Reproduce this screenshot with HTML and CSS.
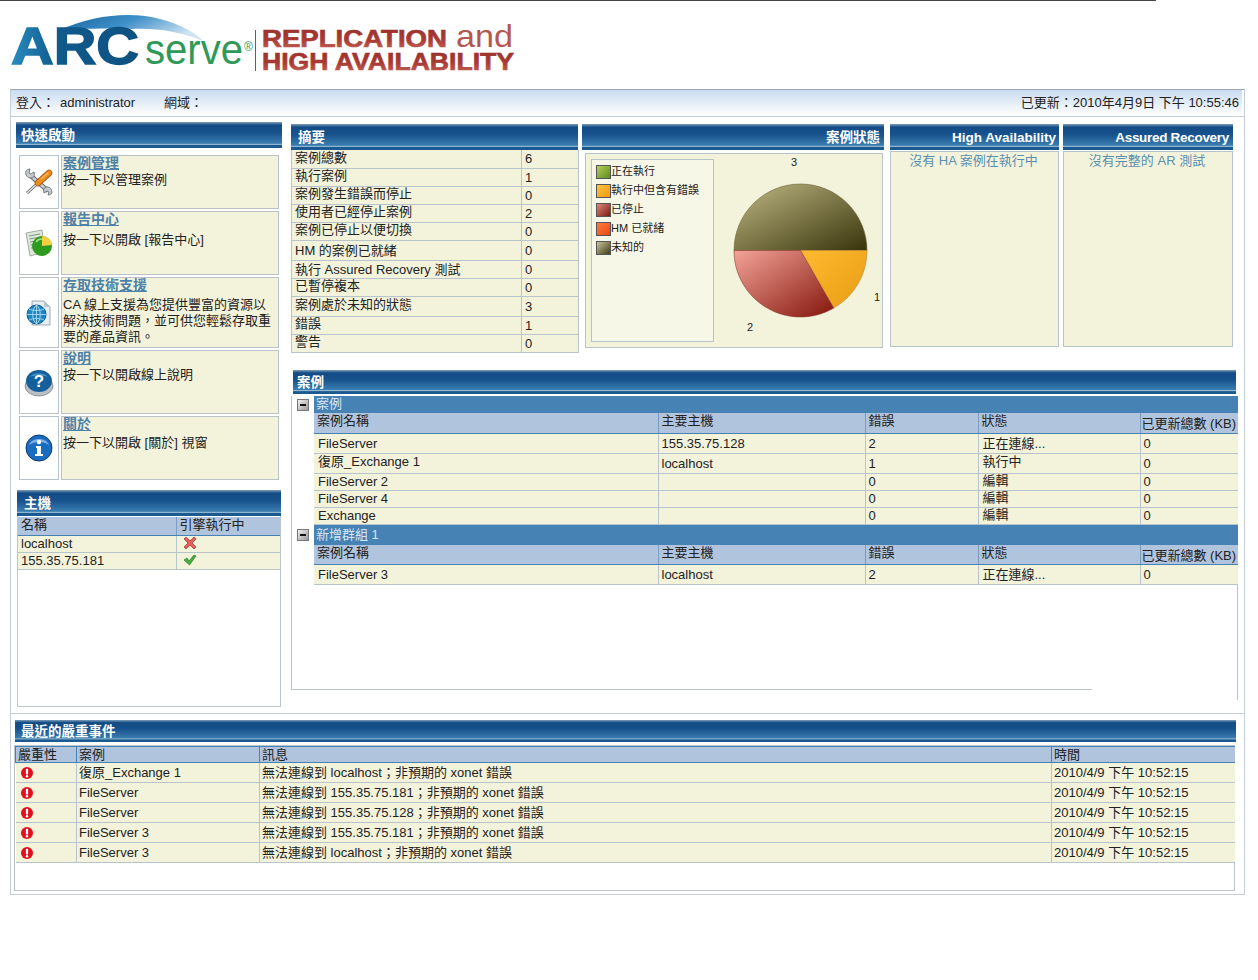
FILE: index.html
```html
<!DOCTYPE html>
<html lang="zh-Hant">
<head>
<meta charset="utf-8">
<title>ARCserve Replication and High Availability</title>
<link rel="stylesheet" href="styles.css">
</head>
<body>
<div class="topline"></div>
<header class="logo">
<svg class="logo-svg" width="530" height="88" viewBox="0 0 530 88">
<defs>
<linearGradient id="arc" x1="0" y1="0" x2="1" y2="0"><stop offset="0" stop-color="#2a8cc0"/><stop offset=".35" stop-color="#105a8c"/><stop offset="1" stop-color="#0d5180"/></linearGradient>
<linearGradient id="sw" x1="0" y1="0" x2="1" y2=".4"><stop offset="0" stop-color="#12619a"/><stop offset=".5" stop-color="#3f8fc8"/><stop offset="1" stop-color="#cfe4f2"/></linearGradient>
<linearGradient id="rd" x1="0" y1="0" x2="0" y2="1"><stop offset="0" stop-color="#97302a"/><stop offset=".55" stop-color="#a83a33"/><stop offset="1" stop-color="#c8695a"/></linearGradient>
</defs>
<path d="M58 30 C95 12 135 11 160 18 C182 24 196 32 204 41 C180 30 155 27 132 28 C112 27 80 27 58 30 Z" fill="url(#sw)"/>
<text class="l-arc" x="11" y="63" textLength="128" lengthAdjust="spacingAndGlyphs" fill="url(#arc)" stroke="url(#arc)" stroke-width="1.500">ARC</text>
<path d="M146 50 C156 34 180 30 203 41" fill="none" stroke="#fff" stroke-width="1.500"/>
<text class="l-serve" x="145" y="63" textLength="98" lengthAdjust="spacingAndGlyphs">serve</text>
<text class="l-reg" x="244" y="50">®</text>
<rect x="255" y="29" width="1" height="41" fill="#a8433a"/>
<text class="l-red" x="262" y="46" textLength="185" lengthAdjust="spacingAndGlyphs" fill="url(#rd)" stroke="url(#rd)" stroke-width=".7">REPLICATION</text>
<text class="l-and" x="456" y="46" textLength="57" lengthAdjust="spacingAndGlyphs">and</text>
<text class="l-red" x="262" y="69" textLength="252" lengthAdjust="spacingAndGlyphs" fill="url(#rd)" stroke="url(#rd)" stroke-width=".7">HIGH AVAILABILITY</text>
</svg>
</header>

<div class="frame">
  <div class="infobar">
    <div class="info-left"><span class="login">登入：</span><span class="user">administrator</span><span>網域：</span></div>
    <div>已更新：2010年4月9日 下午 10:55:46</div>
  </div>

  <div class="main">
    <div class="left">
      <div class="bar bar-quick"><b>快速啟動</b></div>
      <div class="cards">
        <div class="card c54">
          <div class="card-icon">
            <svg width="30" height="30" viewBox="0 0 30 30"><path d="M7 9 L24 24" stroke="#5b6368" stroke-width="4.500"/><path d="M7 9 L24 24" stroke="#c5cbd0" stroke-width="3"/><path d="M2 4 C1 8 3 11 7 11 C10 11 11 8 10 5 L7 7 L5 6 L6 2 C4 2 3 3 2 4 Z" fill="#c5cbd0" stroke="#5b6368" stroke-width=".8"/><path d="M28 26 C28 22 26 20 23 20 C20 20 19 23 20 26 L23 24 L25 25 L24 28 C26 28 27 27 28 26 Z" fill="#c5cbd0" stroke="#5b6368" stroke-width=".8"/><path d="M15 15 L3 26" stroke="#5b6368" stroke-width="3"/><path d="M15 15 L3 26" stroke="#dfe3e6" stroke-width="1.500"/><path d="M14 16 L25 6" stroke="#a8560f" stroke-width="6.500" stroke-linecap="round"/><path d="M14 16 L25 6" stroke="#f08c1e" stroke-width="5" stroke-linecap="round"/><path d="M17 12 L24 6" stroke="#f9c070" stroke-width="1.200"/></svg>
          </div>
          <div class="card-text"><a class="card-link">案例管理</a><p>按一下以管理案例</p></div>
        </div>
        <div class="card c64">
          <div class="card-icon">
            <svg width="30" height="30" viewBox="0 0 30 30"><path d="M2 5 L18 2 L21 24 L6 28 Z" fill="#dfe8d8" stroke="#8a9a90" stroke-width=".8"/><path d="M5 8 L16 6 M5.500 11 L14 9.500 M6 14 L11 13 M6.500 17 L10 16.500 M7 20 L10 19.500" stroke="#7a9a80" stroke-width="1"/><circle cx="18" cy="18" r="10" fill="#2e9a20"/><path d="M18 18 L18 8 A10 10 0 0 1 28 17 Z" fill="#f2d040"/><path d="M12 14 A7 7 0 0 1 18 11" fill="none" stroke="#9be080" stroke-width="1.500"/></svg>
          </div>
          <div class="card-text"><a class="card-link">報告中心</a><p class="gap">按一下以開啟 [報告中心]</p></div>
        </div>
        <div class="card c71">
          <div class="card-icon">
            <svg width="30" height="30" viewBox="0 0 30 30"><path d="M8 3 L20 3 L26 9 L26 27 L8 27 Z" fill="#e6edf3" stroke="#8c97a2" stroke-width=".8"/><path d="M20 3 L20 9 L26 9 Z" fill="#b9c6d2"/><circle cx="12.500" cy="16.500" r="9.500" fill="#1f86c4" stroke="#0d5a94"/><path d="M3 16.500 H22 M12.500 7 V26 M12.500 7 C7.500 11 7.500 22 12.500 26 M12.500 7 C17.500 11 17.500 22 12.500 26 M5 11 C9 13 16 13 20 11 M5 22 C9 20 16 20 20 22" fill="none" stroke="#bfe4f8" stroke-width=".8"/></svg>
          </div>
          <div class="card-text"><a class="card-link">存取技術支援</a><p class="gap-s">CA 線上支援為您提供豐富的資源以解決技術問題，並可供您輕鬆存取重要的產品資訊。</p></div>
        </div>
        <div class="card c64">
          <div class="card-icon">
            <svg width="30" height="30" viewBox="0 0 30 30"><ellipse cx="15" cy="19" rx="14" ry="10" fill="#b8c0c6" stroke="#7d868c" stroke-width=".8"/><ellipse cx="15" cy="14" rx="13" ry="11" fill="#15609c"/><path d="M6 10 C9 5 20 5 24 10 C20 8 10 8 6 10 Z" fill="#4a92c4"/><text class="q" x="15" y="20" text-anchor="middle">?</text></svg>
          </div>
          <div class="card-text"><a class="card-link">說明</a><p>按一下以開啟線上說明</p></div>
        </div>
        <div class="card c64">
          <div class="card-icon">
            <svg width="30" height="30" viewBox="0 0 30 30"><circle cx="15" cy="15" r="13" fill="#1a6cc0" stroke="#0c3a70"/><path d="M5 12 C8 4 22 4 25 12 C20 8 10 8 5 12 Z" fill="#7cb4e8"/><circle cx="15" cy="9" r="2.200" fill="#fff"/><path d="M12 13 H17 V21 H19 V23 H11 V21 H13 V15 H12 Z" fill="#fff"/></svg>
          </div>
          <div class="card-text"><a class="card-link">關於</a><p class="gap-t">按一下以開啟 [關於] 視窗</p></div>
        </div>
      </div>

      <div class="hosts">
        <div class="bar bar-host"><b>主機</b></div>
        <div class="host-box">
          <table class="tbl host-tbl">
            <colgroup><col class="hc1"><col class="hc2"></colgroup>
            <tr class="head h18"><th>名稱</th><th>引擎執行中</th></tr>
            <tr class="h17"><td>localhost</td><td><svg class="st" width="14" height="14" viewBox="0 0 14 14"><path d="M1 3 L3 1 L7 5 L11 1 L13 3 L9 7 L13 11 L11 13 L7 9 L3 13 L1 11 L5 7 Z" fill="#e8605a" stroke="#a8302a" stroke-width=".7"/></svg></td></tr>
            <tr class="h17"><td>155.35.75.181</td><td><svg class="st" width="14" height="14" viewBox="0 0 14 14"><path d="M1 7 L4 5 L6 8 L11 2 L13 3 L6.500 12 Z" fill="#46b040" stroke="#2a7a28" stroke-width=".7"/></svg></td></tr>
          </table>
        </div>
      </div>
    </div>

    <div class="right">
      <div class="top-panels">
        <section class="p-summary">
          <div class="bar bar-sum"><b>摘要</b></div>
          <table class="tbl sum-tbl">
            <colgroup><col class="sc1"><col class="sc2"></colgroup>
            <tr class="h18"><td class="up">案例總數</td><td>6</td></tr>
            <tr class="h18"><td class="up">執行案例</td><td>1</td></tr>
            <tr class="h18"><td class="up">案例發生錯誤而停止</td><td>0</td></tr>
            <tr class="h18"><td class="up">使用者已經停止案例</td><td>2</td></tr>
            <tr class="h18"><td class="up">案例已停止以便切換</td><td>0</td></tr>
            <tr class="h20"><td>HM 的案例已就緒</td><td>0</td></tr>
            <tr class="h18"><td>執行 Assured Recovery 測試</td><td>0</td></tr>
            <tr class="h18"><td class="up">已暫停複本</td><td>0</td></tr>
            <tr class="h20"><td class="up">案例處於未知的狀態</td><td>3</td></tr>
            <tr class="h18"><td class="up">錯誤</td><td>1</td></tr>
            <tr class="h18"><td class="up">警告</td><td>0</td></tr>
          </table>
        </section>
        <section class="p-status">
          <div class="bar bar-right"><b>案例狀態</b></div>
          <div class="status-body">
            <ul class="legend">
              <li><i class="sw sw-g"></i>正在執行</li>
              <li><i class="sw sw-o"></i>執行中但含有錯誤</li>
              <li><i class="sw sw-r"></i>已停止</li>
              <li><i class="sw sw-h"></i>HM 已就緒</li>
              <li><i class="sw sw-u"></i>未知的</li>
            </ul>
            <svg class="pie" width="168" height="193" viewBox="0 0 168 193">
              <defs>
                <linearGradient id="pu" x1="0" y1="0" x2="1" y2="1"><stop offset="0" stop-color="#c0ba86"/><stop offset="1" stop-color="#38330a"/></linearGradient>
                <linearGradient id="pr" x1="0" y1="0" x2="1" y2="1"><stop offset="0" stop-color="#f4a498"/><stop offset="1" stop-color="#84150c"/></linearGradient>
                <linearGradient id="po" x1="0" y1="0" x2="1" y2="1"><stop offset="0" stop-color="#ffba30"/><stop offset="1" stop-color="#e89c14"/></linearGradient>
              </defs>
              <path d="M86.500 96.500 L20 96.500 A66.500 66.500 0 0 1 153 96.500 Z" fill="url(#pu)" stroke="#6b6538" stroke-width=".6"/>
              <path d="M86.500 96.500 L153 96.500 A66.500 66.500 0 0 1 119.700 154.100 Z" fill="url(#po)" stroke="#b88a30" stroke-width=".6"/>
              <path d="M86.500 96.500 L119.700 154.100 A66.500 66.500 0 0 1 20 96.500 Z" fill="url(#pr)" stroke="#8a3a30" stroke-width=".6"/>
              <text class="pie-n" x="77" y="12">3</text>
              <text class="pie-n" x="160" y="147">1</text>
              <text class="pie-n" x="33" y="177">2</text>
            </svg>
          </div>
        </section>
        <section class="p-ha">
          <div class="bar bar-ha"><b>High Availability</b></div>
          <div class="note-body">沒有 HA 案例在執行中</div>
        </section>
        <section class="p-ar">
          <div class="bar bar-right bar-ar"><b>Assured Recovery</b></div>
          <div class="note-body">沒有完整的 AR 測試</div>
        </section>
      </div>

      <div class="bar bar-cases"><b>案例</b></div>
      <div class="tree">
        <div class="group">
          <span class="minus"></span>
          <div class="gtitle g17">案例</div>
        </div>
        <div class="gtable">
          <table class="tbl case-tbl">
            <colgroup><col class="cc1"><col class="cc2"><col class="cc3"><col class="cc4"><col class="cc5"></colgroup>
            <tr class="head h20"><th class="up">案例名稱</th><th class="up">主要主機</th><th class="up">錯誤</th><th class="up">狀態</th><th class="dn">已更新總數 (KB)</th></tr>
            <tr class="h20"><td>FileServer</td><td>155.35.75.128</td><td>2</td><td>正在連線...</td><td>0</td></tr>
            <tr class="h20"><td class="up">復原_Exchange 1</td><td>localhost</td><td>1</td><td class="up">執行中</td><td>0</td></tr>
            <tr class="h17"><td>FileServer 2</td><td></td><td>0</td><td class="up">編輯</td><td>0</td></tr>
            <tr class="h17"><td>FileServer 4</td><td></td><td>0</td><td class="up">編輯</td><td>0</td></tr>
            <tr class="h17"><td>Exchange</td><td></td><td>0</td><td class="up">編輯</td><td>0</td></tr>
          </table>
        </div>
        <div class="group">
          <span class="minus"></span>
          <div class="gtitle g20">新增群組 1</div>
        </div>
        <div class="gtable">
          <table class="tbl case-tbl">
            <colgroup><col class="cc1"><col class="cc2"><col class="cc3"><col class="cc4"><col class="cc5"></colgroup>
            <tr class="head h20"><th class="up">案例名稱</th><th class="up">主要主機</th><th class="up">錯誤</th><th class="up">狀態</th><th class="dn">已更新總數 (KB)</th></tr>
            <tr class="h20"><td>FileServer 3</td><td>localhost</td><td>2</td><td>正在連線...</td><td>0</td></tr>
          </table>
        </div>
      </div>
    </div>
  </div>

  <div class="events">
    <div class="bar bar-ev"><b>最近的嚴重事件</b></div>
    <div class="ev-box">
      <table class="tbl ev-tbl">
        <colgroup><col class="ec1"><col class="ec2"><col class="ec3"><col class="ec4"></colgroup>
        <tr class="head h16"><th>嚴重性</th><th>案例</th><th>訊息</th><th>時間</th></tr>
        <tr class="h20"><td><svg class="err" width="12" height="12" viewBox="0 0 13 13"><circle cx="6.500" cy="6.500" r="6.500" fill="#e0101c"/><rect x="5.300" y="2" width="2.400" height="6" fill="#fff"/><circle cx="6.500" cy="10" r="1.300" fill="#fff"/></svg></td><td>復原_Exchange 1</td><td>無法連線到 localhost；非預期的 xonet 錯誤</td><td>2010/4/9 下午 10:52:15</td></tr>
        <tr class="h20"><td><svg class="err" width="12" height="12" viewBox="0 0 13 13"><circle cx="6.500" cy="6.500" r="6.500" fill="#e0101c"/><rect x="5.300" y="2" width="2.400" height="6" fill="#fff"/><circle cx="6.500" cy="10" r="1.300" fill="#fff"/></svg></td><td>FileServer</td><td>無法連線到 155.35.75.181；非預期的 xonet 錯誤</td><td>2010/4/9 下午 10:52:15</td></tr>
        <tr class="h20"><td><svg class="err" width="12" height="12" viewBox="0 0 13 13"><circle cx="6.500" cy="6.500" r="6.500" fill="#e0101c"/><rect x="5.300" y="2" width="2.400" height="6" fill="#fff"/><circle cx="6.500" cy="10" r="1.300" fill="#fff"/></svg></td><td>FileServer</td><td>無法連線到 155.35.75.128；非預期的 xonet 錯誤</td><td>2010/4/9 下午 10:52:15</td></tr>
        <tr class="h20"><td><svg class="err" width="12" height="12" viewBox="0 0 13 13"><circle cx="6.500" cy="6.500" r="6.500" fill="#e0101c"/><rect x="5.300" y="2" width="2.400" height="6" fill="#fff"/><circle cx="6.500" cy="10" r="1.300" fill="#fff"/></svg></td><td>FileServer 3</td><td>無法連線到 155.35.75.181；非預期的 xonet 錯誤</td><td>2010/4/9 下午 10:52:15</td></tr>
        <tr class="h20"><td><svg class="err" width="12" height="12" viewBox="0 0 13 13"><circle cx="6.500" cy="6.500" r="6.500" fill="#e0101c"/><rect x="5.300" y="2" width="2.400" height="6" fill="#fff"/><circle cx="6.500" cy="10" r="1.300" fill="#fff"/></svg></td><td>FileServer 3</td><td>無法連線到 localhost；非預期的 xonet 錯誤</td><td>2010/4/9 下午 10:52:15</td></tr>
      </table>
    </div>
  </div>
</div>
</body>
</html>
```

FILE: styles.css
```css
* { box-sizing: border-box; }
html, body { margin: 0; padding: 0; background: #fff; }
body {
  width: 1258px;
  height: 980px;
  overflow: hidden;
  font-family: "Liberation Sans", "Noto Sans CJK TC", sans-serif;
  font-size: 13px;
  line-height: 15px;
  color: #222;
}
.topline { width: 1156px; height: 1px; background: #444; }
.logo { height: 88px; }
.logo-svg { display: block; }
.l-arc { font: bold 51px "Liberation Sans", sans-serif; }
.l-serve { font: 42px "Liberation Sans", sans-serif; fill: #2f9a58; }
.l-reg { font: 12px "Liberation Sans", sans-serif; fill: #2f9a58; }
.l-red { font: bold 24px "Liberation Sans", sans-serif; }
.l-and { font: 32px "Liberation Sans", sans-serif; fill: #b5574e; }

.frame {
  margin-left: 10px;
  width: 1235px;
  height: 806px;
  border: 1px solid #c3ced8;
  border-top-color: #9aa6b0;
}
.infobar {
  width: 1231px;
  height: 26px;
  padding: 0 3px 2px 5px;
  display: flex;
  justify-content: space-between;
  align-items: center;
  background: linear-gradient(#c9dcf0, #fff);
  color: #222;
}
.info-left { display: flex; }
.login { width: 44px; }
.user { width: 104px; }

.main {
  display: flex;
  gap: 9px;
  padding: 5px 0 6px 5px;
  border-top: 1px solid #c3ced8;
  border-bottom: 1px solid #c3ced8;
}

.bar {
  height: 26px;
  display: flex;
  align-items: center;
  color: #fff;
  background: linear-gradient(#7f9fb8 0, #134b85 12%, #17528c 40%, #3a7db0 82%, #a3c3da 86%, #1a5a90 90%, #1a5a90 100%);
}
.bar b { font-size: 13.500px; font-weight: 700; }
.bar-quick { width: 266px; padding-left: 5px; }
.bar-host { padding-left: 7px; }
.bar-sum { padding-left: 7px; }
.bar-right { justify-content: flex-end; padding-right: 4px; }
.bar-ar b { letter-spacing: -.3px; }
.bar-ha { justify-content: flex-end; padding-right: 3px; }
.bar-cases { width: 943px; height: 24px; margin: 17px 0 2px 2px; padding-left: 4px; }
.bar-ev { width: 1221px; height: 22px; margin-left: 4px; padding-left: 6px; }

.left { width: 266px; }
.cards { margin: 7px 0 0 3px; display: flex; flex-direction: column; gap: 2px; }
.card { display: flex; gap: 2px; width: 260px; }
.c54 { height: 54px; }
.c64 { height: 64px; }
.c71 { height: 71px; }
.card-icon {
  width: 40px;
  border: 1px solid #b8c2c8;
  display: flex;
  align-items: center;
  justify-content: center;
  background: #fff;
}
.card-text {
  width: 218px;
  padding: 0 1px;
  border: 1px solid #b8c2c8;
  background: #f3f3dc;
}
.card-link {
  display: block;
  margin-top: -1px;
  font-size: 14px;
  font-weight: 700;
  line-height: 16px;
  color: #4d81a8;
  text-decoration: underline;
}
.card-text p { margin: 1px 0 0; line-height: 16px; color: #222; }
.card-text p.gap { margin-top: 5px; }
.card-text p.gap-s { margin-top: 4px; }
.card-text p.gap-t { margin-top: 3px; }
.q { font: bold 17px "Liberation Sans", sans-serif; fill: #fff; }

.hosts { margin: 10px 0 0 1px; width: 264px; }
.host-box { height: 191px; padding-top: 1px; border: 1px solid #bcc6ce; border-top: 0; }

.tbl { border-collapse: collapse; table-layout: fixed; line-height: 13px; }
.tbl td, .tbl th {
  padding: 0 3px;
  font-weight: 400;
  text-align: left;
  white-space: nowrap;
  vertical-align: middle;
}
.tbl td { background: #f3f3dc; border: 1px solid #b8c4cc; border-top: 0; }
.tbl th { background: #b0c4de; border-bottom: 1px solid #4682b4; border-left: 1px solid #7a9cc0; }
.tbl td:first-child, .tbl th:first-child { border-left: 0; }
.tbl td:last-child, .tbl th:last-child { border-right: 0; }
.head th { color: #222; }
.h16 { height: 16px; }
.h17 { height: 17px; }
.h18 { height: 18px; }
.h20 { height: 20px; }
.tbl .up { padding-bottom: 3px; }
.tbl .dn { padding-top: 2px; }

.host-tbl { width: 262px; }
.host-tbl th { padding-bottom: 2px; }
.host-tbl td { padding-bottom: 1px; }
.hc1 { width: 158px; }
.hc2 { width: 104px; }
.st { display: block; margin-left: 3px; }

.right { width: 947px; }
.top-panels { margin-top: 2px; height: 229px; display: flex; }
.p-summary { width: 287px; }
.sum-tbl { width: 287px; border-left: 1px solid #b8c4cc; border-right: 1px solid #b8c4cc; }
.sc1 { width: 230px; }
.sc2 { width: 57px; }
.p-status { width: 302px; margin-left: 4px; }
.p-ha { width: 169px; margin-left: 6px; }
.p-ar { width: 170px; margin-left: 4px; }
.status-body {
  margin: 3px 0 0 3px;
  width: 298px;
  height: 195px;
  display: flex;
  background: #f3f3dc;
  border: 1px solid #b8c4cc;
}
.legend {
  margin: 5px 0 0 5px;
  padding: 2px 0 0 4px;
  width: 123px;
  height: 183px;
  list-style: none;
  background: #f7f7e8;
  border: 1px solid #b8c4cc;
  font-size: 11px;
}
.legend li { display: flex; align-items: center; height: 19px; white-space: nowrap; }
.sw { width: 15px; height: 14px; border: 1px solid #555; flex: none; }
.sw-g { background: linear-gradient(135deg, #b5d05a, #5f8a20); }
.sw-o { background: linear-gradient(135deg, #ffc040, #f09c10); }
.sw-r { background: linear-gradient(135deg, #e08878, #7a1a12); }
.sw-h { background: linear-gradient(135deg, #ff7a40, #e84a10); }
.sw-u { background: linear-gradient(135deg, #c8c49a, #403c18); }
.pie { flex: none; }
.pie-n { font: 11px "Liberation Sans", sans-serif; fill: #222; }
.note-body {
  margin-top: 1px;
  height: 196px;
  text-align: center;
  padding: 1px 2px 0 0;
  color: #5b8fb0;
  background: #f3f3dc;
  border: 1px solid #b8c4cc;
}

.tree {
  position: relative;
  height: 294px;
  border-left: 1px solid #b8c4cc;
}
.tree::before {
  content: "";
  position: absolute;
  left: -1px;
  bottom: 0;
  width: 801px;
  height: 1px;
  background: #b8c4cc;
}
.tree::after {
  content: "";
  position: absolute;
  right: 0;
  top: 189px;
  width: 1px;
  height: 115px;
  background: #b8c4cc;
}
.group { display: flex; align-items: center; }
.minus {
  flex: none;
  position: relative;
  width: 12px;
  height: 12px;
  margin: 0 5px;
  background: linear-gradient(135deg, #f0f0f0, #9a9a9a);
  border: 1px solid #777;
}
.minus::after {
  content: "";
  position: absolute;
  left: 2px;
  top: 4px;
  width: 6px;
  height: 2px;
  background: #111;
}
.gtitle {
  width: 924px;
  padding-left: 2px;
  background: #4682b4;
  color: #d8e6f2;
}
.g17 { height: 17px; line-height: 15px; }
.g20 { height: 20px; line-height: 19px; }
.gtable { margin-left: 22px; }
.case-tbl { width: 924px; }
.case-tbl th.up { padding-bottom: 4px; }
.case-tbl td:first-child, .case-tbl td:nth-child(4) { padding-left: 4px; }
.case-tbl th:last-child { padding-left: 1px; }
.cc1 { width: 344px; }
.cc2 { width: 207px; }
.cc3 { width: 113px; }
.cc4 { width: 162px; }
.cc5 { width: 98px; }

.events { padding-top: 6px; }
.ev-box {
  margin: 3px 0 0 3px;
  width: 1221px;
  height: 146px;
  border: 1px solid #b8c4cc;
}
.ev-tbl { width: 1219px; }
.ev-tbl td, .ev-tbl th { padding-left: 2px; }
.ev-tbl th { padding-bottom: 1px; border-top: 1px solid #4682b4; border-right: 1px solid #4682b4; }
.ev-tbl th:first-child { border-left: 1px solid #4682b4; }
.ec1 { width: 61px; }
.ec2 { width: 183px; }
.ec3 { width: 792px; }
.ec4 { width: 183px; }
.err { display: block; margin-left: 3px; }
```
